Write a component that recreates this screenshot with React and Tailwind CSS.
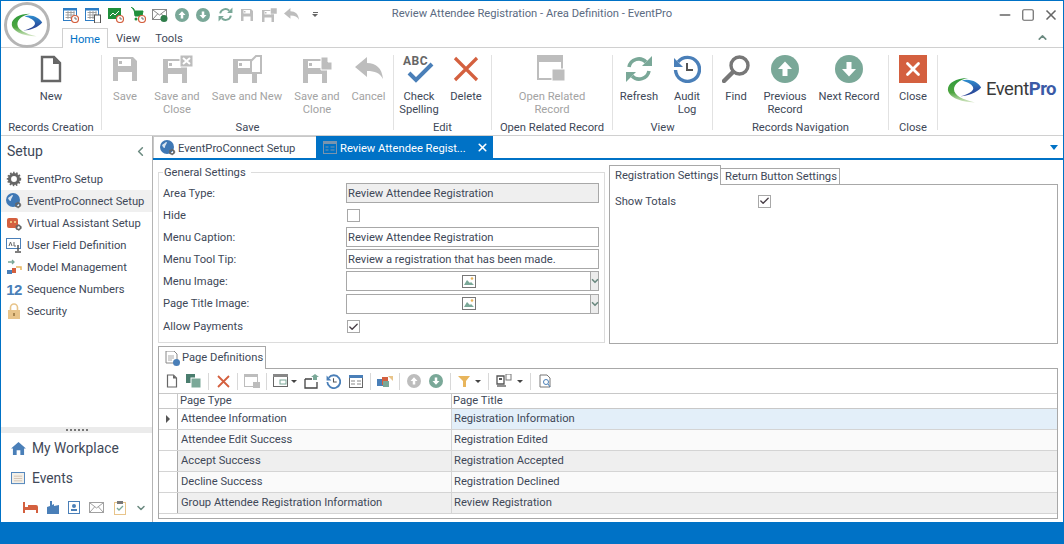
import { ChevronLeft, ChevronDown, ChevronUp, X, Minus, Square, Check } from 'lucide-react'

const GRAY = '#bdbdbd'
const SAGE = '#7aa898'
const RED = '#d4603f'
const BLUE = '#4a7fb8'

function Floppy({ c = GRAY, x = 0, y = 0 }) {
    return (
        <path fill={c} fillRule="evenodd" transform={`translate(${x} ${y})`} d="M0 0h20l4 4v20H0zM5 2v7h13V2zM6 4h3v3H6zM5 15v9h14v-9z" />
    )
}

function NewPage({ size = 28, c = '#666' }) {
    return (
        <svg width={size} height={size} viewBox="0 0 28 28">
            <path d="M5 2h12l6 6v18H5z" fill="#fff" stroke={c} strokeWidth="2.4" />
            <path d="M16 2v7h7" fill={c} />
        </svg>
    )
}

function SaveIcon() {
    return <svg width="28" height="28" viewBox="0 0 28 28"><Floppy x={2} y={2} /></svg>
}

function SaveCloseIcon() {
    return (
        <svg width="32" height="28" viewBox="0 0 32 28">
            <Floppy x={2} y={4} />
            <rect x="19" y="0" width="13" height="12" fill={GRAY} stroke="#fff" />
            <path d="M22 3l7 6M29 3l-7 6" stroke="#fff" strokeWidth="2" />
        </svg>
    )
}

function SaveNewIcon() {
    return (
        <svg width="32" height="28" viewBox="0 0 32 28">
            <Floppy x={2} y={4} />
            <path d="M20 6l5-5h5v17h-10z" fill="#fff" stroke={GRAY} strokeWidth="2" />
        </svg>
    )
}

function SaveCloneIcon() {
    return (
        <svg width="32" height="28" viewBox="0 0 32 28">
            <Floppy x={2} y={4} />
            <path d="M20 2h7v5h4v8H20z" fill={GRAY} stroke="#fff" />
        </svg>
    )
}

function UndoArrow({ size = 28, c = GRAY }) {
    return (
        <svg width={size} height={size} viewBox="0 0 28 28">
            <path d="M0 12L12 2v6c9 0 15 5 16 16-3-6-8-8-16-8v6z" fill={c} />
        </svg>
    )
}

function CheckSpelling() {
    return (
        <div className="relative w-[32px] h-[30px]">
            <span className="absolute left-0 top-[-3px] text-[12px] font-bold text-[#666] tracking-[0.5px]">ABC</span>
            <svg className="absolute left-0 top-0" width="32" height="30" viewBox="0 0 32 30">
                <path d="M6 18l7 7L29 9" fill="none" stroke={BLUE} strokeWidth="4" />
            </svg>
        </div>
    )
}

function BigX() {
    return (
        <svg width="28" height="28" viewBox="0 0 28 28">
            <path d="M3 3l22 22M25 3L3 25" stroke={RED} strokeWidth="3.2" />
        </svg>
    )
}

function RelatedIcon() {
    return (
        <svg width="30" height="28" viewBox="0 0 30 28">
            <rect x="1" y="1" width="24" height="23" fill="#fff" stroke={GRAY} strokeWidth="2" />
            <rect x="1" y="1" width="24" height="6" fill={GRAY} />
            <rect x="15" y="14" width="13" height="12" fill={GRAY} stroke="#fff" />
        </svg>
    )
}

function RefreshIcon({ size = 28, c = SAGE }) {
    return (
        <svg width={size} height={size} viewBox="0 0 28 28">
            <path d="M4 12a10 10 0 0 1 17-5" fill="none" stroke={c} strokeWidth="3.6" />
            <path d="M17 11h10V1z" fill={c} />
            <path d="M24 16a10 10 0 0 1-17 5" fill="none" stroke={c} strokeWidth="3.6" />
            <path d="M11 17H1v10z" fill={c} />
        </svg>
    )
}

function AuditIcon({ size = 28 }) {
    return (
        <svg width={size} height={size} viewBox="0 0 28 28">
            <path d="M5 7a12 12 0 1 1-2.5 8" fill="none" stroke={BLUE} strokeWidth="3.4" />
            <path d="M1 3v9h9z" fill={BLUE} />
            <path d="M14 8v7h6" fill="none" stroke="#555" strokeWidth="2" />
        </svg>
    )
}

function FindIcon() {
    return (
        <svg width="28" height="28" viewBox="0 0 28 28">
            <circle cx="17.5" cy="10.5" r="8.5" fill="none" stroke="#777" strokeWidth="3.4" />
            <path d="M11 17L2 26" stroke="#777" strokeWidth="4.4" strokeLinecap="round" />
        </svg>
    )
}

function RoundArrow({ size = 28, down = false, c = SAGE }) {
    return (
        <svg width={size} height={size} viewBox="0 0 28 28">
            <circle cx="14" cy="14" r="14" fill={c} />
            <path d={down ? 'M11.5 7h5v7h4.500L14 21.500 7 14h4.500z' : 'M11.500 21h5v-7h4.500L14 6.500 7 14h4.500z'} fill="#fff" />
        </svg>
    )
}

function CloseTile() {
    return (
        <div className="w-[28px] h-[28px] bg-[#d4603f] flex items-center justify-center">
            <X size={22} color="#fff" strokeWidth={3} />
        </div>
    )
}

function Swirl({ size = 40 }) {
    return (
        <svg width={size} height={size * 0.75} viewBox="0 0 40 30">
            <defs>
                <linearGradient id="swirlGreen" x1="0" y1="0" x2="0" y2="1">
                    <stop offset="0" stopColor="#2f9a3c" />
                    <stop offset="0.6" stopColor="#4ea640" />
                    <stop offset="1" stopColor="#d8e8c8" />
                </linearGradient>
                <linearGradient id="swirlBlue" x1="0" y1="0" x2="0" y2="1">
                    <stop offset="0" stopColor="#2f8fd0" />
                    <stop offset="0.55" stopColor="#2a5aa8" />
                    <stop offset="1" stopColor="#2a3f90" />
                </linearGradient>
            </defs>
            <path d="M24 1C10 1 1 7 1 14c0 8 13 15 31 15C18 26 8 21 8 14 8 8 14 3 24 1z" fill="url(#swirlGreen)" />
            <path d="M17 4c9-3 19 2 22 8-5 6-15 10-24 10 9-2 15-6 15-9 0-4-6-7-13-9z" fill="url(#swirlBlue)" />
        </svg>
    )
}

function Orb() {
    return (
        <div className="absolute left-[3px] top-[1px] w-[46px] h-[46px] rounded-full bg-white border-[3px] border-[#b5b5b5] flex items-center justify-center">
            <Swirl size={32} />
        </div>
    )
}

function CalTiny({ clock = true, note = false }) {
    return (
        <svg width="16" height="16" viewBox="0 0 16 16">
            <rect x="0.500" y="1.500" width="13" height="12" fill="#fff" stroke="#2d7cc4" />
            <rect x="0" y="1" width="14" height="2.500" fill="#2d7cc4" />
            <path d="M2.500 5.500h9M2.500 8h9M2.500 10.500h9M5 4v8M8 4v8M11 4v8" stroke="#999" strokeWidth="0.900" />
            {clock && <circle cx="12" cy="12" r="3.500" fill="#fff" stroke="#d4603f" strokeWidth="1.200" />}
            {clock && <path d="M12 10v2h2" stroke="#555" fill="none" strokeWidth="0.800" />}
            {note && <rect x="9.500" y="8" width="6" height="8" fill="#fff" stroke="#555" />}
        </svg>
    )
}

function ChartTiny() {
    return (
        <svg width="16" height="16" viewBox="0 0 16 16">
            <rect x="0" y="1" width="13" height="11" fill="#1f8f3b" />
            <path d="M2 9l3-3 2 2 4-4" stroke="#fff" fill="none" />
            <circle cx="12" cy="12" r="3.500" fill="#fff" stroke="#d4603f" strokeWidth="1.200" />
            <path d="M12 10v2h2" stroke="#555" fill="none" strokeWidth="0.800" />
        </svg>
    )
}

function CartTiny() {
    return (
        <svg width="16" height="16" viewBox="0 0 16 16">
            <path d="M1 0l3 2 1 7h7l1-5H4" fill="#1f8f3b" stroke="#1f8f3b" />
            <circle cx="6" cy="12" r="1.500" fill="#1f8f3b" />
            <circle cx="12" cy="12" r="3.500" fill="#fff" stroke="#d4603f" strokeWidth="1.200" />
            <path d="M12 10v2h2" stroke="#555" fill="none" strokeWidth="0.800" />
        </svg>
    )
}

function MailTiny({ badge = true, c = '#888' }) {
    return (
        <svg width="16" height="14" viewBox="0 0 16 14">
            <rect x="0.500" y="1.500" width="14" height="10" fill="#fff" stroke={c} />
            <path d="M1 2l6.500 5L14 2M1 11l4.500-5M14 11l-4.500-5" stroke={c} fill="none" />
            {badge && <circle cx="12" cy="10.500" r="3.500" fill="#2f7d4a" />}
        </svg>
    )
}

function SmallSave() {
    return <svg width="14" height="14" viewBox="0 0 28 28"><Floppy x={2} y={2} /></svg>
}

function SmallSaveClose() {
    return <svg width="16" height="14" viewBox="0 0 32 28"><Floppy x={2} y={4} /><rect x="19" y="0" width="13" height="12" fill={GRAY} stroke="#fff" /></svg>
}

function QuickBar() {
    return (
        <div className="flex items-center h-[27px] pl-[59px]">
            <div className="w-[22px] flex justify-center"><CalTiny /></div>
            <div className="w-[22px] flex justify-center"><CalTiny clock={false} note /></div>
            <div className="w-[23px] flex justify-center"><ChartTiny /></div>
            <div className="w-[22px] flex justify-center"><CartTiny /></div>
            <div className="w-[22px] flex justify-center"><MailTiny /></div>
            <div className="w-[21px] flex justify-center"><RoundArrow size={14} /></div>
            <div className="w-[22px] flex justify-center"><RoundArrow size={14} down /></div>
            <div className="w-[22px] flex justify-center"><RefreshIcon size={15} /></div>
            <div className="w-[21px] flex justify-center"><SmallSave /></div>
            <div className="w-[23px] flex justify-center"><SmallSaveClose /></div>
            <div className="w-[23px] flex justify-center"><UndoArrow size={15} /></div>
            <div className="w-[24px] flex flex-col items-center gap-[1px]">
                <div className="w-[5px] h-px bg-[#666]" />
                <div className="w-0 h-0 border-l-[3px] border-r-[3px] border-t-[3px] border-l-transparent border-r-transparent border-t-[#666]" />
            </div>
        </div>
    )
}

function RibbonButton({ w, label, disabled, children }) {
    return (
        <div className="flex flex-col items-center shrink-0" style={{ width: w }}>
            <div className="h-[35px] flex items-start justify-center">{children}</div>
            <div className={`text-center leading-[13px] whitespace-pre-line ${disabled ? 'text-[#a3a3a3]' : 'text-[#404858]'}`}>{label}</div>
        </div>
    )
}

function RibbonGroup({ w, label, children }) {
    return (
        <div className="shrink-0 flex flex-col" style={{ width: w }}>
            <div className="flex h-[65px]">{children}</div>
            <div className="text-center h-[14px] leading-[14px] pt-px text-[#404858]">{label}</div>
        </div>
    )
}

function Sep() {
    return <div className="w-px h-[75px] bg-[#e2e2e2] shrink-0" />
}

function Ribbon() {
    return (
        <div className="flex items-start h-[88px] pt-[7px] border-b border-[#d0d0d0]">
            <RibbonGroup w={100} label="Records Creation">
                <RibbonButton w={100} label="New"><NewPage /></RibbonButton>
            </RibbonGroup>
            <Sep />
            <RibbonGroup w={291} label="Save">
                <RibbonButton w={46} label="Save" disabled><SaveIcon /></RibbonButton>
                <RibbonButton w={58} label={'Save and\nClose'} disabled><SaveCloseIcon /></RibbonButton>
                <RibbonButton w={82} label="Save and New" disabled><SaveNewIcon /></RibbonButton>
                <RibbonButton w={58} label={'Save and\nClone'} disabled><SaveCloneIcon /></RibbonButton>
                <RibbonButton w={45} label="Cancel" disabled><UndoArrow /></RibbonButton>
            </RibbonGroup>
            <Sep />
            <RibbonGroup w={97} label="Edit">
                <RibbonButton w={50} label={'Check\nSpelling'}><CheckSpelling /></RibbonButton>
                <RibbonButton w={44} label="Delete"><BigX /></RibbonButton>
            </RibbonGroup>
            <Sep />
            <RibbonGroup w={120} label="Open Related Record">
                <RibbonButton w={120} label={'Open Related\nRecord'} disabled><RelatedIcon /></RibbonButton>
            </RibbonGroup>
            <Sep />
            <RibbonGroup w={99} label="View">
                <RibbonButton w={52} label="Refresh"><RefreshIcon /></RibbonButton>
                <RibbonButton w={44} label={'Audit\nLog'}><AuditIcon /></RibbonButton>
            </RibbonGroup>
            <Sep />
            <RibbonGroup w={175} label="Records Navigation">
                <RibbonButton w={46} label="Find"><FindIcon /></RibbonButton>
                <RibbonButton w={52} label={'Previous\nRecord'}><RoundArrow /></RibbonButton>
                <RibbonButton w={76} label="Next Record"><RoundArrow down /></RibbonButton>
            </RibbonGroup>
            <Sep />
            <RibbonGroup w={48} label="Close">
                <RibbonButton w={48} label="Close"><CloseTile /></RibbonButton>
            </RibbonGroup>
            <Sep />
            <div className="flex items-center ml-[9px] mt-[21px]">
                <Swirl size={35} />
                <span className="text-[18.5px] tracking-[-0.5px] text-[#3a3a3a] ml-[4px] whitespace-nowrap">Event<span className="font-bold text-[#3b5aa6]">Pro</span></span>
            </div>
        </div>
    )
}

const setupItems = [
    { label: 'EventPro Setup', icon: 'gear' },
    { label: 'EventProConnect Setup', icon: 'globe', active: true },
    { label: 'Virtual Assistant Setup', icon: 'bot' },
    { label: 'User Field Definition', icon: 'field' },
    { label: 'Model Management', icon: 'model' },
    { label: 'Sequence Numbers', icon: 'seq' },
    { label: 'Security', icon: 'lock' },
]

function Cog({ x, y, r = 3 }) {
    return (
        <g>
            <circle cx={x} cy={y} r={r} fill="none" stroke="#666" strokeWidth={r * 0.7} />
            <circle cx={x} cy={y} r={r * 1.35} fill="none" stroke="#666" strokeWidth={r * 0.5} strokeDasharray="1.500 1.500" />
        </g>
    )
}

function GlobeIcon() {
    return (
        <svg width="16" height="16" viewBox="0 0 16 16">
            <circle cx="7" cy="7" r="7" fill="#3f78b5" />
            <path d="M2 5c2-1 3-3 5-3 0 2-2 3-2 5s-2 1-3-2z" fill="#fff" opacity="0.800" />
            <Cog x={12} y={12} r={2} />
        </svg>
    )
}

function SetupIcon({ name }) {
    if (name === 'gear') {
        return <svg width="16" height="16" viewBox="0 0 16 16"><Cog x={8} y={8} r={4.500} /></svg>
    }
    if (name === 'globe') return <GlobeIcon />
    if (name === 'bot') {
        return (
            <svg width="16" height="16" viewBox="0 0 16 16">
                <rect x="1" y="3" width="11" height="10" rx="2" fill="#d4603f" />
                <rect x="4" y="6" width="2" height="2" fill="#f0c080" />
                <rect x="8" y="6" width="2" height="2" fill="#f0c080" />
                <Cog x={12.500} y={12.500} r={2} />
            </svg>
        )
    }
    if (name === 'field') {
        return (
            <svg width="16" height="16" viewBox="0 0 16 16">
                <rect x="0.500" y="1.500" width="14" height="10" fill="#fff" stroke="#4a7fb8" />
                <path d="M3 9l1.500-4L6 9M8 5v4h2" stroke="#666" fill="none" />
                <path d="M12 8v6M9 15h6" stroke="#555" strokeWidth="1.500" />
            </svg>
        )
    }
    if (name === 'model') {
        return (
            <svg width="16" height="16" viewBox="0 0 16 16">
                <path d="M2 3h6M6 1l2 2-2 2" stroke="#7aa898" fill="none" strokeWidth="1.300" />
                <rect x="1" y="11" width="5" height="4" fill="#4a7fb8" />
                <rect x="6" y="9" width="4" height="5" fill="#d4603f" />
                <path d="M10 8h5v3" stroke="#e8b55c" fill="none" strokeWidth="1.500" />
            </svg>
        )
    }
    if (name === 'seq') {
        return <span className="text-[15px] font-bold text-[#4a7fb8] leading-none tracking-[-0.500px]" style={{ fontFamily: '"Liberation Sans", sans-serif' }}>12</span>
    }
    return (
        <svg width="14" height="16" viewBox="0 0 14 16">
            <path d="M3.500 7V4.500a3.500 3.500 0 0 1 7 0V7" fill="none" stroke="#e8c48a" strokeWidth="1.600" />
            <rect x="1" y="7" width="12" height="9" fill="#e8c48a" />
            <rect x="6" y="10" width="2" height="3" fill="#a88650" />
        </svg>
    )
}

function Sidebar() {
    return (
        <div className="w-[152px] shrink-0 border-r border-[#b4b4b4] flex flex-col text-[#404858]">
            <div className="h-[32px] flex items-center justify-between pl-[6px] pr-[4px] shrink-0 mt-[-1px]">
                <span className="text-[14px]">Setup</span>
                <ChevronLeft size={15} color="#6b8a80" strokeWidth={2.5} />
            </div>
            <div className="flex flex-col mt-[1px]">
                {setupItems.map((it) => (
                    <div key={it.label} className={`h-[22px] flex items-center pl-[5px] ${it.active ? 'bg-[#f0f0f0]' : ''}`}>
                        <div className="w-[16px] h-[16px] flex items-center justify-center shrink-0"><SetupIcon name={it.icon} /></div>
                        <span className="ml-[5px] mt-[2px] whitespace-nowrap">{it.label}</span>
                    </div>
                ))}
            </div>
            <div className="flex-1" />
            <div className="h-[6px] bg-[#ebebeb] flex items-center justify-center gap-[2px]">
                {[0, 1, 2, 3, 4, 5].map((i) => <div key={i} className="w-[2px] h-[2px] bg-[#777]" />)}
            </div>
            <div className="h-[30px] flex items-center pl-[10px] text-[13.8px]">
                <svg width="15" height="13" viewBox="0 0 16 14"><path d="M8 0l8 7h-2v7h-4V9H6v5H2V7H0z" fill={BLUE} /></svg>
                <span className="ml-[6px]">My Workplace</span>
            </div>
            <div className="h-[30px] flex items-center pl-[10px] text-[13.8px]">
                <svg width="15" height="13" viewBox="0 0 16 14">
                    <rect x="0.500" y="0.500" width="14" height="12" fill="#f4f0e8" stroke={BLUE} />
                    <path d="M3 4.500h9M3 7h9M3 9.500h9" stroke="#d0c0b0" />
                </svg>
                <span className="ml-[6px]">Events</span>
            </div>
            <div className="h-[29px] flex items-center pl-[22px] gap-[9px]">
                <svg width="15" height="11" viewBox="0 0 15 11"><path d="M0 0h2v5h3V3h8a2 2 0 0 1 2 2v6h-2V8H2v3H0z" fill={RED} /></svg>
                <svg width="12" height="13" viewBox="0 0 12 13"><path d="M0 13V6l3-1V0h2v4l2-1 0 2 5-1v9z" fill={BLUE} /></svg>
                <svg width="12" height="13" viewBox="0 0 12 13"><rect x="0.500" y="0.500" width="11" height="12" fill="#fff" stroke={BLUE} /><circle cx="6" cy="5" r="2" fill={BLUE} /><rect x="3" y="8" width="6" height="2" fill={BLUE} /></svg>
                <MailTiny badge={false} c="#a0a0a0" />
                <svg width="12" height="14" viewBox="0 0 12 14"><rect x="0.500" y="1.500" width="11" height="12" fill="#fff" stroke="#e8c48a" /><rect x="3" y="0" width="6" height="3" fill="#777" /><path d="M3 7l2 2 4-4" stroke={SAGE} fill="none" strokeWidth="1.300" /></svg>
                <ChevronDown size={12} color="#6b8a80" strokeWidth={3} />
            </div>
        </div>
    )
}

function DocTabs() {
    return (
        <div className="h-[24px] flex shrink-0 border-b-2 border-[#0072c6]">
            <div className="w-[163px] border-t border-l border-[#c8c8c8] flex items-center pl-[6px] text-[#404858]">
                <GlobeIcon />
                <span className="ml-[2px] mt-[4px] whitespace-nowrap">EventProConnect Setup</span>
            </div>
            <div className="w-[177px] bg-[#0072c6] text-white flex items-center pl-[7px] pt-px">
                <svg width="14" height="13" viewBox="0 0 14 13">
                    <rect x="0.500" y="0.500" width="13" height="12" fill="none" stroke="#7a94ad" />
                    <rect x="0" y="0" width="14" height="3" fill="#7a94ad" />
                    <path d="M2.500 6h3M2.500 9h3M7.500 6h4M7.500 9h4" stroke="#7a94ad" />
                </svg>
                <span className="ml-[3px] mt-[3px] whitespace-nowrap">Review Attendee Regist...</span>
                <X size={13} strokeWidth={3} className="ml-auto mr-[4px]" />
            </div>
            <div className="flex-1 flex items-center justify-end pr-[5px]">
                <div className="w-0 h-0 border-l-[4px] border-r-[4px] border-t-[5px] border-l-transparent border-r-transparent border-t-[#0072c6]" />
            </div>
        </div>
    )
}

function PictureGlyph() {
    return (
        <svg width="14" height="13" viewBox="0 0 14 13">
            <rect x="0.500" y="0.500" width="13" height="12" fill="#fff" stroke="#777" />
            <path d="M2 10l3-5 3 3 1-1 3 3z" fill={SAGE} />
            <circle cx="10" cy="3.500" r="1.300" fill="#e8b55c" />
        </svg>
    )
}

function Box({ checked }) {
    return (
        <div className="w-[13px] h-[13px] border border-[#a8a8a8] bg-white flex items-center justify-center">
            {checked && <Check size={12} color="#4a4048" strokeWidth={3} />}
        </div>
    )
}

function FormRow({ label, h = 22, children }) {
    return (
        <div className="flex items-center" style={{ height: h }}>
            <div className="w-[183px] shrink-0 pt-[2px]">{label}</div>
            {children}
        </div>
    )
}

function TextField({ value, readOnly }) {
    return (
        <div className={`w-[253px] h-[20px] border border-[#a8a8a8] pl-[1px] pt-[2px] flex items-center whitespace-nowrap ${readOnly ? 'bg-[#efefef]' : 'bg-white'}`}>{value}</div>
    )
}

function ImageField() {
    return (
        <div className="w-[253px] h-[20px] border border-[#a8a8a8] flex bg-white">
            <div className="flex-1 flex items-center justify-center"><PictureGlyph /></div>
            <div className="w-[8px] bg-[#ececec] border-l border-[#a8a8a8] flex items-center justify-center">
                <ChevronDown size={10} color="#6b8a80" strokeWidth={4} className="shrink-0" />
            </div>
        </div>
    )
}

function GeneralSettings() {
    return (
        <div className="relative w-[447px] h-[171px] mt-[12px] border border-[#dcdcdc] pl-[4px] pt-[9px]">
            <div className="absolute left-[4px] top-[-7px] bg-white px-[1px] pr-[5px] leading-[13px]">General Settings</div>
            <FormRow label="Area Type:"><TextField value="Review Attendee Registration" readOnly /></FormRow>
            <FormRow label="Hide"><div className="ml-[1px]"><Box /></div></FormRow>
            <FormRow label="Menu Caption:"><TextField value="Review Attendee Registration" /></FormRow>
            <FormRow label="Menu Tool Tip:"><TextField value="Review a registration that has been made." /></FormRow>
            <FormRow label="Menu Image:"><ImageField /></FormRow>
            <FormRow label="Page Title Image:" h={23}><ImageField /></FormRow>
            <FormRow label="Allow Payments" h={23}><div className="ml-[1px]"><Box checked /></div></FormRow>
        </div>
    )
}

function RegistrationSettings() {
    return (
        <div className="w-[449px] ml-[4px] mt-[5px] flex flex-col">
            <div className="flex items-end h-[20px] shrink-0 relative z-10 mb-[-1px]">
                <div className="w-[112px] h-[20px] border border-b-0 border-[#a8a8a8] bg-white pl-[5px] pt-px flex items-center whitespace-nowrap">Registration Settings</div>
                <div className="w-[119px] h-[17px] border border-l-0 border-[#a8a8a8] pl-[4px] pt-[2px] flex items-center whitespace-nowrap">Return Button Settings</div>
            </div>
            <div className="h-[160px] border border-[#a8a8a8] pl-[5px] pt-[6px]">
                <div className="flex items-center h-[20px]">
                    <div className="w-[143px] pt-[2px]">Show Totals</div>
                    <Box checked />
                </div>
            </div>
        </div>
    )
}

function ToolDivider({ ml = 6 }) {
    return <div className="w-px h-[17px] bg-[#d8d8d8]" style={{ marginLeft: ml }} />
}

function Caret() {
    return <div className="w-0 h-0 border-l-[3px] border-r-[3px] border-t-[3px] border-l-transparent border-r-transparent border-t-[#444]" />
}

function GridToolbar() {
    return (
        <div className="h-[24px] flex items-center pl-[6px] shrink-0">
            <NewPage size={14} />
            <svg className="ml-[7px]" width="16" height="15" viewBox="0 0 16 15"><rect x="0" y="0" width="9" height="9" fill="#4a7d6e" /><rect x="5" y="4" width="10" height="10" fill={SAGE} stroke="#fff" /></svg>
            <ToolDivider ml={6} />
            <svg className="ml-[8px]" width="13" height="13" viewBox="0 0 13 13"><path d="M1 1l11 11M12 1L1 12" stroke={RED} strokeWidth="1.800" /></svg>
            <ToolDivider ml={7} />
            <svg className="ml-[6px]" width="16" height="14" viewBox="0 0 16 14"><rect x="0.500" y="0.500" width="13" height="12" fill="#fff" stroke={GRAY} /><rect x="0" y="0" width="14" height="3" fill={GRAY} /><rect x="9" y="8" width="7" height="6" fill={GRAY} /></svg>
            <ToolDivider ml={6} />
            <svg className="ml-[6px]" width="15" height="14" viewBox="0 0 15 14"><rect x="0.500" y="0.500" width="14" height="12" fill="#fff" stroke="#666" /><rect x="0" y="0" width="15" height="3" fill="#888" /><rect x="7" y="6" width="6" height="4" fill="none" stroke={SAGE} /></svg>
            <div className="ml-[3px]"><Caret /></div>
            <svg className="ml-[7px]" width="16" height="15" viewBox="0 0 16 15"><path d="M1 5h7M1 5v9h12V8" fill="none" stroke="#444" strokeWidth="1.300" /><path d="M9 6V3H7l4-3 4 3h-2v3z" fill={SAGE} /></svg>
            <div className="ml-[6px] h-[15px]"><AuditIcon size={15} /></div>
            <svg className="ml-[8px]" width="14" height="13" viewBox="0 0 14 13"><rect x="0.500" y="0.500" width="13" height="12" fill="#fff" stroke="#666" /><rect x="0" y="0" width="14" height="3" fill="#4a7fb8" /><path d="M2 6h4M2 9h4M8 6h4M8 9h4" stroke="#888" /></svg>
            <ToolDivider ml={7} />
            <svg className="ml-[6px]" width="16" height="12" viewBox="0 0 16 12"><rect x="0" y="4" width="6" height="7" fill={BLUE} /><rect x="5" y="2" width="6" height="8" fill={RED} /><rect x="6" y="6" width="6" height="6" fill={SAGE} /><path d="M11 1h5v5" fill="#e8c48a" /></svg>
            <ToolDivider ml={6} />
            <div className="ml-[7px] h-[14px]"><RoundArrow size={14} c={GRAY} /></div>
            <div className="ml-[8px] h-[14px]"><RoundArrow size={14} down /></div>
            <ToolDivider ml={7} />
            <svg className="ml-[7px]" width="13" height="13" viewBox="0 0 13 13"><path d="M0 1h12L8 6v6H5V6z" fill="#e8b55c" /></svg>
            <div className="ml-[4px]"><Caret /></div>
            <ToolDivider ml={7} />
            <svg className="ml-[7px]" width="16" height="14" viewBox="0 0 16 14"><path d="M1 2h7v8H1z" fill="none" stroke="#555" strokeWidth="1.300" /><rect x="3" y="4" width="3" height="2" fill="#555" /><rect x="10" y="0" width="5" height="6" fill="#fff" stroke="#777" /><path d="M1 12h9" stroke="#555" strokeWidth="1.300" /></svg>
            <div className="ml-[5px]"><Caret /></div>
            <ToolDivider ml={7} />
            <svg className="ml-[8px]" width="13" height="14" viewBox="0 0 13 14"><path d="M1 1h7l3 3v9H1z" fill="#fff" stroke="#777" /><circle cx="7" cy="8" r="2.500" fill="none" stroke={BLUE} /><path d="M9 10l2 3" stroke={BLUE} /></svg>
        </div>
    )
}

const pageRows = [
    ['Attendee Information', 'Registration Information', 'bg-white'],
    ['Attendee Edit Success', 'Registration Edited', 'bg-[#fafafa]'],
    ['Accept Success', 'Registration Accepted', 'bg-[#efefef]'],
    ['Decline Success', 'Registration Declined', 'bg-[#fafafa]'],
    ['Group Attendee Registration Information', 'Review Registration', 'bg-[#efefef]'],
]

function PageGrid() {
    return (
        <div className="flex flex-col">
            <div className="grid grid-cols-[19px_274px_1fr] h-[16px] border-t border-b border-[#c8c8c8] leading-[14px]">
                <div className="border-r border-[#c8c8c8]" />
                <div className="border-r border-[#c8c8c8] pl-[2px]">Page Type</div>
                <div className="pl-[1px]">Page Title</div>
            </div>
            {pageRows.map((row, i) => (
                <div key={row[0]} className={`grid grid-cols-[19px_274px_1fr] h-[21px] leading-[20px] border-b border-[#d4d4d4] ${row[2]}`}>
                    <div className="bg-white border-r border-[#a8a8a8] flex items-center justify-center">
                        {i === 0 && <div className="w-0 h-0 border-t-[4px] border-b-[4px] border-l-[4px] border-t-transparent border-b-transparent border-l-[#555]" />}
                    </div>
                    <div className="border-r border-[#d4d4d4] pl-[3px] whitespace-nowrap">{row[0]}</div>
                    <div className={`pl-[2px] whitespace-nowrap ${i === 0 ? 'bg-[#e3eff9]' : ''}`}>{row[1]}</div>
                </div>
            ))}
        </div>
    )
}

function PageDefinitions() {
    return (
        <div className="ml-[5px] mr-[5px] mt-[2px] flex flex-col">
            <div className="w-[108px] h-[23px] border border-b-0 border-[#a8a8a8] flex items-center pl-[6px] relative z-10 mb-[-1px] bg-white">
                <svg width="15" height="15" viewBox="0 0 15 15"><path d="M1 0h8l3 3v9H1z" fill="#fff" stroke="#888" /><path d="M3 5h6M3 7h6M3 9h4" stroke="#aaa" /><circle cx="11.500" cy="11.500" r="3.500" fill={BLUE} /></svg>
                <span className="ml-[2px] whitespace-nowrap">Page Definitions</span>
            </div>
            <div className="h-[151px] border border-[#a8a8a8]">
                <GridToolbar />
                <PageGrid />
            </div>
        </div>
    )
}

export default function App() {
    return (
        <div className="relative w-[1064px] h-[544px] bg-white border-x border-t border-[#0072c6] flex flex-col overflow-hidden text-[11.2px] text-[#404858]" style={{ fontFamily: 'Roboto, "Noto Sans", sans-serif' }}>
            <Orb />
            <div className="grid grid-cols-[1fr_auto_1fr] h-[27px] shrink-0">
                <QuickBar />
                <div className="flex items-center whitespace-nowrap text-[#5b6b82]">Review Attendee Registration - Area Definition - EventPro</div>
                <div className="flex items-center justify-end gap-[6px] pr-[4px] text-[#666]">
                    <Minus size={16} strokeWidth={2.5} />
                    <Square size={14} strokeWidth={2} className="mx-[2px]" />
                    <X size={16} strokeWidth={2.5} />
                </div>
            </div>
            <div className="h-[20px] flex items-end shrink-0 border-b border-[#d0d0d0] pl-[61px]">
                <div className="w-[46px] h-[20px] border border-b-0 border-[#d0d0d0] bg-white pt-[4px] text-[#0072c6] flex items-center justify-center mb-[-1px] relative">Home</div>
                <div className="w-[40px] h-[20px] pt-[4px] flex items-center justify-center">View</div>
                <div className="w-[42px] h-[20px] pt-[4px] flex items-center justify-center">Tools</div>
                <div className="flex-1 flex justify-end pr-[14px] h-[20px] items-center"><ChevronUp size={13} color="#6b8a80" strokeWidth={3} /></div>
            </div>
            <Ribbon />
            <div className="flex flex-1 min-h-0">
                <Sidebar />
                <div className="flex-1 flex flex-col min-w-0">
                    <DocTabs />
                    <div className="flex pl-[5px] shrink-0">
                        <GeneralSettings />
                        <RegistrationSettings />
                    </div>
                    <PageDefinitions />
                </div>
            </div>
            <div className="h-[22px] bg-[#0072c6] shrink-0" />
        </div>
    )
}
